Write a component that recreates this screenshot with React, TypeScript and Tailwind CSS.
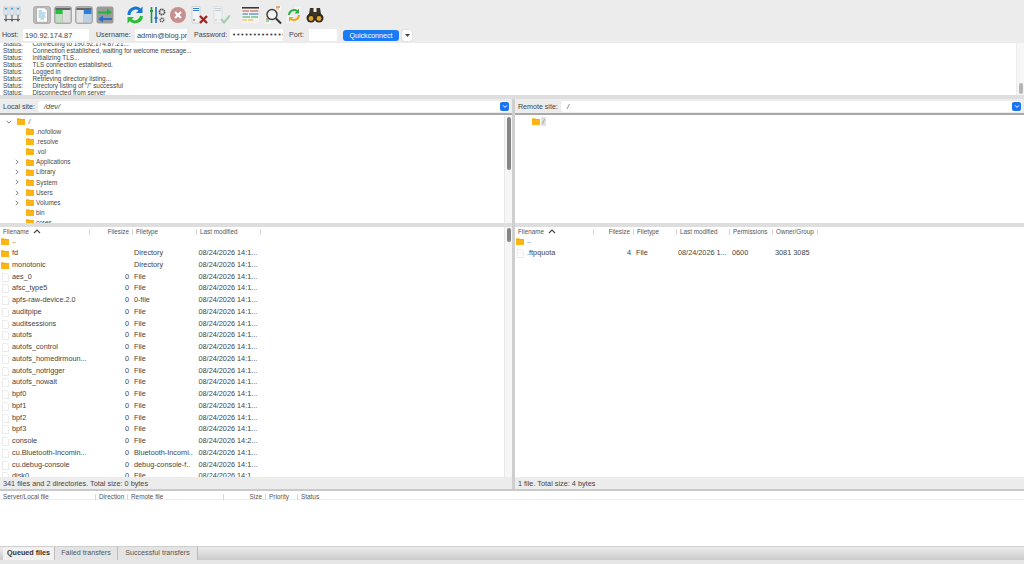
import React from "react";

const Ico = ({ w = 18, children, className = "" }: { w?: number; children: React.ReactNode; className?: string }) => (
  <svg width={w} height={20} viewBox={`0 0 ${w} 20`} className={`shrink-0 ${className}`}>{children}</svg>
);

const Folder = ({ className = "" }: { className?: string }) => (
  <svg width="8" height="7" viewBox="0 0 9 8" preserveAspectRatio="none" className={`shrink-0 ${className}`}>
    <path d="M0 1 a.6.6 0 0 1 .6-.6 H3.4 L4.2 1.2 H8.4 a.6.6 0 0 1 .6.6 V7.4 a.6.6 0 0 1-.6.6 H.6 a.6.6 0 0 1-.6-.6 Z" fill="#fdb515" />
    <rect x="0" y="1.4" width="9" height=".5" fill="#e8a010" />
  </svg>
);

const FileIco = () => (
  <svg width="7" height="9" viewBox="0 0 7 9" className="shrink-0">
    <path d="M.5.5 H4.8 L6.5 2.2 V8.5 H.5 Z" fill="#fff" stroke="#e2e2e2" strokeWidth=".7" />
  </svg>
);

const Chevron = ({ dir }: { dir: "down" | "right" }) => (
  <svg width="6" height="6" viewBox="0 0 6 6" className="shrink-0">
    <path d={dir === "down" ? "M.8 1.8 L3 4.2 L5.2 1.8" : "M1.8.8 L4.2 3 L1.8 5.2"} fill="none" stroke="#666" strokeWidth=".8" />
  </svg>
);

const DropBtn = () => (
  <span className="w-[9px] h-[9px] rounded-[2px] bg-[#1a73f0] flex items-center justify-center shrink-0">
    <svg width="6" height="5" viewBox="0 0 6 5"><path d="M1 1.3 L3 3.4 L5 1.3" fill="none" stroke="#fff" strokeWidth="1" /></svg>
  </span>
);

const Toolbar = () => (
  <div className="h-[27px] flex items-center pl-[3px] pt-[3px] shrink-0">
    {/* site manager */}
    <Ico w={18}>
      <rect x="1" y="2" width="4" height="8" fill="#dfe8ee" stroke="#a9b4ba" strokeWidth=".5" />
      <rect x="7" y="2" width="4" height="8" fill="#dfe8ee" stroke="#a9b4ba" strokeWidth=".5" />
      <rect x="13" y="2" width="4" height="8" fill="#dfe8ee" stroke="#a9b4ba" strokeWidth=".5" />
      <rect x="2" y="3" width="2" height="1.5" fill="#3d9be0" /><rect x="8" y="3" width="2" height="1.5" fill="#3d9be0" /><rect x="14" y="3" width="2" height="1.5" fill="#3d9be0" />
      <path d="M3 10 V14 M9 10 V14 M15 10 V14 M1 14.5 H17" stroke="#55636b" strokeWidth="1" />
      <circle cx="3" cy="15.5" r="1.1" fill="#5b6a72" /><circle cx="9" cy="15.5" r="1.1" fill="#5b6a72" /><circle cx="15" cy="15.5" r="1.1" fill="#5b6a72" />
    </Ico>
    {/* message log */}
    <Ico w={18} className="ml-[12px]">
      <rect x=".5" y="1.5" width="17" height="17" rx="2" fill="#bdbdbd" stroke="#969696" strokeWidth=".6" />
      <path d="M3.5 2.8 H11.5 L14.5 5.8 V17.2 H3.5 Z" fill="#fdfdfd" stroke="#808080" strokeWidth=".5" />
      <path d="M5.5 6 H9 M5.5 8 H12.5 M7.5 10 H12 M5.5 12 H12.5" stroke="#5aa5de" strokeWidth=".8" />
      <path d="M7.5 14 H11 M5.5 10 H7.5" stroke="#4fb56b" strokeWidth=".8" />
    </Ico>
    {/* local tree */}
    <Ico w={18} className="ml-[3px]">
      <rect x=".5" y="1.5" width="17" height="17" rx="2" fill="#b0b0b0" stroke="#8e8e8e" strokeWidth=".6" />
      <rect x="1.5" y="3" width="15" height="2" fill="#666" />
      <rect x="1.5" y="5" width="7" height="12.5" fill="#bfe0bf" />
      <rect x="1.5" y="5" width="7" height="4" fill="#22c13c" />
      <rect x="9" y="5" width="7.5" height="12.5" fill="#dedede" />
    </Ico>
    {/* remote tree */}
    <Ico w={18} className="ml-[3px]">
      <rect x=".5" y="1.5" width="17" height="17" rx="2" fill="#b0b0b0" stroke="#8e8e8e" strokeWidth=".6" />
      <rect x="1.5" y="3" width="15" height="2" fill="#666" />
      <rect x="1.5" y="5" width="7" height="12.5" fill="#e4e4e4" />
      <rect x="9" y="5" width="7.5" height="12.5" fill="#bcd0e4" />
      <rect x="9" y="5" width="7.5" height="4" fill="#2a80d8" />
    </Ico>
    {/* queue */}
    <Ico w={18} className="ml-[3px]">
      <rect x=".5" y="1.5" width="17" height="17" rx="2" fill="#9a9a9a" />
      <path d="M2 6.5 H11 V3.5 L16 7.5 L11 10 V8.5 H2 Z" fill="#22b53a" />
      <path d="M16 13 H7 V10.5 L2 14 L7 17.5 V15 H16 Z" fill="#2a6fc8" />
    </Ico>
    {/* refresh */}
    <Ico w={18} className="ml-[12px]">
      <path d="M3 10 A6.5 6.5 0 0 1 14 5" fill="none" stroke="#1677d2" strokeWidth="3" />
      <path d="M16.5 1.5 V8 H10 Z" fill="#1677d2" />
      <path d="M15.5 11 A6.5 6.5 0 0 1 4.5 15" fill="none" stroke="#2abf34" strokeWidth="3" />
      <path d="M1.5 18.5 V12 H8 Z" fill="#2abf34" />
    </Ico>
    {/* filters */}
    <Ico w={17} className="ml-[5px]">
      <path d="M2.5 2 V18" stroke="#1d9a3c" strokeWidth="1.6" />
      <path d="M7 2 V18" stroke="#1c6ed0" strokeWidth="1.6" />
      <rect x="1" y="5" width="3" height="2" fill="#1d9a3c" /><rect x="5.5" y="12" width="3" height="2" fill="#1c6ed0" />
      <circle cx="13" cy="7" r="2.6" fill="none" stroke="#4a4a4a" strokeWidth="1.7" strokeDasharray="1.4 .6" />
      <circle cx="13" cy="15" r="1.8" fill="none" stroke="#555" strokeWidth="1.4" strokeDasharray="1.1 .5" />
    </Ico>
    {/* cancel */}
    <Ico w={18} className="ml-[3px]">
      <circle cx="9" cy="10" r="8" fill="#c98e8e" />
      <path d="M6 7 L12 13 M12 7 L6 13" stroke="#fff" strokeWidth="2.2" />
    </Ico>
    {/* disconnect */}
    <Ico w={18} className="ml-[3px]">
      <path d="M2 1.5 H10 V18 H2 Z" fill="#f5f5f5" stroke="#b5b5b5" strokeWidth=".5" />
      <path d="M3 3.5 H9 M3 5.5 H9" stroke="#2f7fd0" strokeWidth="1.2" />
      <circle cx="4" cy="15" r=".8" fill="#444" />
      <path d="M10 11 L17 18 M17 11 L10 18" stroke="#a52222" strokeWidth="2.4" />
    </Ico>
    {/* reconnect */}
    <Ico w={18} className="ml-[4px] opacity-60">
      <path d="M2 1.5 H10 V18 H2 Z" fill="#f5f5f5" stroke="#c5c5c5" strokeWidth=".5" />
      <path d="M3 3.5 H9 M3 5.5 H9" stroke="#a9bccc" strokeWidth="1.2" />
      <circle cx="4" cy="15" r=".8" fill="#888" />
      <path d="M9 14 L12 17.5 L18 10.5" fill="none" stroke="#6fbb7c" strokeWidth="2" />
    </Ico>
    {/* directory listing filters */}
    <Ico w={19} className="ml-[11px]">
      <rect x="1" y="2" width="17" height="16" fill="#f2f2f2" />
      <rect x="1" y="2" width="17" height="1.6" fill="#3a3a3a" />
      <path d="M1.5 6 H8 M9 6 H17.5" stroke="#c84a3a" strokeWidth="1.2" />
      <path d="M1.5 9 H7 M8 9 H17.5" stroke="#2a6fc8" strokeWidth="1.2" />
      <path d="M1.5 12 H9 M10 12 H17" stroke="#2fae45" strokeWidth="1.2" />
      <path d="M1.5 15 H6 M7 15 H12" stroke="#e3b22c" strokeWidth="1.2" />
    </Ico>
    {/* compare */}
    <Ico w={18} className="ml-[4px]">
      <rect x="11" y="1" width="6" height="5" fill="#f7f7f7" /><path d="M12 2 H16" stroke="#c84a3a" strokeWidth="1" /><path d="M12 4 H15" stroke="#e3b22c" strokeWidth="1" />
      <rect x="1" y="12" width="6" height="7" fill="#f7f7f7" /><path d="M2 14 H6" stroke="#c84a3a" strokeWidth="1" /><path d="M2 16 H5" stroke="#2fae45" strokeWidth="1" />
      <circle cx="8" cy="9.5" r="5" fill="#f6f6f6" fillOpacity=".7" stroke="#3f3f3f" strokeWidth="1.5" />
      <path d="M12 13.5 L17 18.5" stroke="#333" strokeWidth="2" />
    </Ico>
    {/* sync browsing */}
    <Ico w={18} className="ml-[3px]">
      <rect x="9" y="1" width="8" height="9" fill="#f4f4f4" stroke="#ddd" strokeWidth=".5" />
      <rect x="1" y="10" width="8" height="9" fill="#f4f4f4" stroke="#ddd" strokeWidth=".5" />
      <path d="M4 10 A5 5 0 0 1 12 6" fill="none" stroke="#2fae45" strokeWidth="2" />
      <path d="M14 3.5 V8.5 H9.5 Z" fill="#2fae45" />
      <path d="M14 10 A5 5 0 0 1 6 14" fill="none" stroke="#e8a820" strokeWidth="2" />
      <path d="M4 17 V12 H8.5 Z" fill="#e8a820" />
    </Ico>
    {/* binoculars */}
    <Ico w={18} className="ml-[3px]">
      <path d="M4 3 H7.5 V7 H10.5 V3 H14 L15 9 H3 Z" fill="#3d3325" />
      <circle cx="5" cy="13" r="4.5" fill="#2e2a24" />
      <circle cx="13" cy="13" r="4.5" fill="#2e2a24" />
      <circle cx="5" cy="13.5" r="2.4" fill="#e2a52a" />
      <circle cx="13" cy="13.5" r="2.4" fill="#e2a52a" />
      <rect x="7.5" y="8" width="3" height="4" fill="#3d3325" />
    </Ico>
  </div>
);

const Field = ({ value, w, dots }: { value: string; w: string; dots?: boolean }) => (
  <div className={`${w} h-[12px] bg-white rounded-[1px] pl-[2px] overflow-hidden whitespace-nowrap text-[#444] shrink-0 ${dots ? "font-['DejaVu_Sans',sans-serif] text-[7px] leading-[12px] text-[#222]" : "text-[7.4px] leading-[13px]"}`}>{value}</div>
);

const QuickConnect = () => (
  <div className="h-[16px] flex items-center text-[7.1px] leading-[13px] shrink-0 text-[#444]">
    <span className="ml-[2px] w-[21px] shrink-0 pt-px">Host:</span>
    <Field value="190.92.174.87" w="w-[66px]" />
    <span className="ml-[7px] w-[39px] shrink-0 pt-px">Username:</span>
    <Field value="admin@blog.pro" w="w-[52px]" />
    <span className="ml-[7px] w-[36px] shrink-0 pt-px">Password:</span>
    <Field value="•••••••••••••" w="w-[53px]" dots />
    <span className="ml-[6px] w-[20px] shrink-0 pt-px">Port:</span>
    <Field value="" w="w-[28px]" />
    <span className="ml-[6px] w-[56px] h-[11px] rounded-[3px] bg-[#1a7cf4] text-white text-center leading-[12px] shrink-0">Quickconnect</span>
    <span className="ml-[3px] w-[10px] h-[11px] rounded-[2px] bg-white shadow-[0_0_1px_#999] flex items-center justify-center shrink-0">
      <svg width="5" height="3" viewBox="0 0 5 3"><path d="M0 0 H5 L2.5 3 Z" fill="#444" /></svg>
    </span>
  </div>
);

const logLines = [
  "Connecting to 190.92.174.87:21...",
  "Connection established, waiting for welcome message...",
  "Initializing TLS...",
  "TLS connection established.",
  "Logged in",
  "Retrieving directory listing...",
  'Directory listing of "/" successful',
  "Disconnected from server",
];

const Log = () => (
  <div className="h-[52px] bg-white flex shrink-0 overflow-hidden">
    <div className="flex-1 overflow-hidden flex flex-col justify-end">
      <div className="-mb-[1px] text-[6.4px] text-[#444]">
        {logLines.map((l) => (
          <div key={l} className="h-[7px] leading-[7px] flex whitespace-nowrap">
            <span className="w-[32.5px] pl-[3px] shrink-0">Status:</span>
            <span>{l}</span>
          </div>
        ))}
      </div>
    </div>
    <div className="w-[8px] bg-[#f6f6f6] border-l border-[#ececec] flex flex-col justify-end pb-[1px] items-center">
      <div className="w-[4px] h-[11px] bg-[#b5b5b5] rounded-full" />
    </div>
  </div>
);

const SiteBar = ({ label, path, labelW }: { label: string; path: string; labelW: string }) => (
  <div className="h-[16px] flex flex-col shrink-0">
    <div className="h-[14px] flex items-center text-[7.1px] text-[#444] bg-[#ececec]">
      <span className={`${labelW} pl-[3px] pt-[2px] shrink-0 whitespace-nowrap`}>{label}</span>
      <div className="flex-1 h-[11px] bg-white rounded-l-[3px] flex items-center pl-[6px] pr-[1px] mr-[2px] text-[7.4px]">
        <span className="flex-1 italic pt-[2px]">{path}</span>
        <DropBtn />
      </div>
    </div>
    <div className="h-[2px] bg-[#a9a9a9]" />
  </div>
);

const treeItems: { n: string; c?: boolean }[] = [
  { n: ".nofollow" }, { n: ".resolve" }, { n: ".vol" },
  { n: "Applications", c: true }, { n: "Library", c: true }, { n: "System", c: true },
  { n: "Users", c: true }, { n: "Volumes", c: true }, { n: "bin" }, { n: "cores" },
];

const ScrollTrack = ({ thumb, top }: { thumb: string; top: string }) => (
  <div className={`w-[8px] shrink-0 bg-[#f6f6f6] border-l border-[#e8e8e8] flex justify-center ${top}`}>
    <div className={`w-[4px] ${thumb} bg-[#858585] rounded-full`} />
  </div>
);

const LocalTree = () => (
  <div className="h-[108px] bg-white flex shrink-0 overflow-hidden">
    <div className="flex-1 overflow-hidden pt-[1.5px] text-[6.4px] text-[#4a4a4a]">
      <div className="h-[10.15px] flex items-center pl-[5.5px]">
        <Chevron dir="down" />
        <Folder className="ml-[5.5px]" />
        <span className="ml-[3.5px] italic">/</span>
      </div>
      {treeItems.map((t) => (
        <div key={t.n} className="h-[10.15px] flex items-center pl-[13.5px]">
          <span className="w-[6px] shrink-0">{t.c && <Chevron dir="right" />}</span>
          <Folder className="ml-[6px]" />
          <span className="ml-[2.5px]">{t.n}</span>
        </div>
      ))}
    </div>
    <ScrollTrack thumb="h-[53px]" top="pt-[2px]" />
  </div>
);

const RemoteTree = () => (
  <div className="h-[108px] bg-white shrink-0 overflow-hidden pt-[1.5px] text-[6.4px] text-[#666]">
    <div className="h-[10.15px] flex items-center pl-[17px]">
      <Folder />
      <span className="ml-[1px] w-[5px] h-[9px] bg-[#e3e3e3] text-center leading-[9px] italic">/</span>
    </div>
  </div>
);

const HeadCell = ({ w, label, right, sort, last }: { w: string; label: string; right?: boolean; sort?: boolean; last?: boolean }) => (
  <div className={`${w} shrink-0 h-[6px] flex items-center whitespace-nowrap ${right ? "justify-end pr-[3px]" : "pl-[3px]"} ${last ? "" : "border-r border-[#d6d6d6]"}`}>
    <span>{label}</span>
    {sort && (
      <svg width="8" height="5" viewBox="0 0 8 5" className="ml-[4px]"><path d="M1 4 L4 1 L7 4" fill="none" stroke="#444" strokeWidth="1.1" /></svg>
    )}
  </div>
);

type Row = { n: string; s?: string; t?: string; d?: string; dir?: boolean };

const d1 = "08/24/2026 14:1...";
const f = (n: string, d = d1): Row => ({ n, s: "0", t: "File", d });
const localRows: Row[] = [
  { n: "..", dir: true },
  { n: "fd", t: "Directory", d: d1, dir: true },
  { n: "monotonic", t: "Directory", d: d1, dir: true },
  f("aes_0"), f("afsc_type5"),
  { n: "apfs-raw-device.2.0", s: "0", t: "0-file", d: d1 },
  f("auditpipe"), f("auditsessions"), f("autofs"), f("autofs_control"), f("autofs_homedirmoun..."),
  f("autofs_notrigger"), f("autofs_nowait"), f("bpf0"), f("bpf1"), f("bpf2"), f("bpf3"),
  f("console", "08/24/2026 14:2..."),
  { n: "cu.Bluetooth-Incomin...", s: "0", t: "Bluetooth-Incomi..", d: d1 },
  { n: "cu.debug-console", s: "0", t: "debug-console-f..", d: d1 },
  f("disk0"),
];

const NameCell = ({ r }: { r: Row }) => (
  <div className="w-[90px] shrink-0 flex items-center gap-[3px] pl-px whitespace-nowrap">
    <span className="w-[8px] flex justify-center shrink-0">{r.dir ? <Folder /> : <FileIco />}</span>
    <span>{r.n}</span>
  </div>
);

const LocalList = () => (
  <div className="h-[250px] bg-white flex shrink-0 overflow-hidden">
    <div className="flex-1 min-w-0 flex flex-col">
      <div className="h-[8px] pt-[1px] shrink-0 flex items-center text-[6.3px] text-[#555] bg-white">
        <HeadCell w="w-[90px]" label="Filename" sort />
        <HeadCell w="w-[43px]" label="Filesize" right />
        <HeadCell w="w-[64px]" label="Filetype" />
        <HeadCell w="w-[64px]" label="Last modified" />
      </div>
      <div className="flex-1 overflow-hidden text-[7.3px] text-[#444]">
        <div className="h-[1px]" />
        {localRows.map((r) => (
          <div key={r.n} className="h-[11.75px] flex items-center">
            <NameCell r={r} />
            <div className="w-[39px] shrink-0 text-right">{r.s}</div>
            <div className="w-[69.5px] shrink-0 pl-[5px] whitespace-nowrap">{r.t}</div>
            <div className="whitespace-nowrap">{r.d}</div>
          </div>
        ))}
      </div>
    </div>
    <ScrollTrack thumb="h-[14px]" top="pt-[1px]" />
  </div>
);

const RemoteList = () => (
  <div className="h-[250px] bg-white flex flex-col shrink-0 overflow-hidden">
    <div className="h-[8px] pt-[1px] shrink-0 flex items-center text-[6.3px] text-[#555]">
      <HeadCell w="w-[79px]" label="Filename" sort />
      <HeadCell w="w-[40px]" label="Filesize" right />
      <HeadCell w="w-[43px]" label="Filetype" />
      <HeadCell w="w-[53px]" label="Last modified" />
      <HeadCell w="w-[43px]" label="Permissions" />
      <HeadCell w="w-[45px]" label="Owner/Group" />
    </div>
    <div className="text-[7.3px] text-[#444]">
      <div className="h-[1px]" />
      <div className="h-[11.75px] flex items-center pl-[1px]"><span className="w-[8px] flex justify-center"><Folder /></span><span className="ml-[3px]">..</span></div>
      <div className="h-[11.75px] flex items-center whitespace-nowrap">
        <span className="w-[80px] shrink-0 flex items-center pl-[1px]"><span className="w-[8px] flex justify-center"><FileIco /></span><span className="ml-[3px]">.ftpquota</span></span>
        <span className="w-[36px] shrink-0 text-right">4</span>
        <span className="w-[47px] shrink-0 pl-[5px]">File</span>
        <span className="w-[54px] shrink-0">08/24/2026 1...</span>
        <span className="w-[43px] shrink-0">0600</span>
        <span>3081 3085</span>
      </div>
    </div>
  </div>
);

const Status = ({ text }: { text: string }) => (
  <div className="h-[12px] bg-[#ececec] text-[7.3px] leading-[13px] pl-[3px] text-[#444] shrink-0">{text}</div>
);

const Pane = ({ children, className }: { children: React.ReactNode; className: string }) => (
  <div className={`${className} flex flex-col shrink-0`}>{children}</div>
);

const Sash = () => <div className="h-[4px] bg-[#dedede] shrink-0" />;

const Queue = () => (
  <div className="h-[55px] bg-white shrink-0 flex flex-col">
    <div className="h-[9px] pt-[3px] flex items-center text-[6.4px] text-[#555] border-b border-[#ededed]">
      <HeadCell w="w-[96px]" label="Server/Local file" />
      <HeadCell w="w-[32px]" label="Direction" />
      <HeadCell w="w-[96px]" label="Remote file" />
      <HeadCell w="w-[42px]" label="Size" right />
      <HeadCell w="w-[32px]" label="Priority" />
      <HeadCell w="w-[60px]" label="Status" last />
    </div>
  </div>
);

const Tabs = () => (
  <div className="h-[18px] shrink-0 bg-[#e6e6e6] border-t border-[#cfcfcf] flex flex-col text-[7.2px] text-[#555]">
    <div className="h-[13px] flex w-full pl-[3px] bg-gradient-to-b from-[#ececec] to-[#cbcbcb]">
      <div className="w-[52px] h-[13px] bg-[#f1f1f1] font-bold text-[#333] text-center leading-[12px] border-r border-[#bbb]">Queued files</div>
      <div className="w-[63px] h-[13px] bg-[#e4e4e4] text-center leading-[12px] border-r border-[#bbb]">Failed transfers</div>
      <div className="w-[80px] h-[13px] bg-[#e4e4e4] text-center leading-[12px] border-r border-[#bbb]">Successful transfers</div>
    </div>
  </div>
);

export default function App() {
  return (
    <div className="w-[1024px] h-[564px] overflow-hidden bg-[#ececec] flex flex-col font-['Liberation_Sans',Arial,sans-serif]">
      <Toolbar />
      <QuickConnect />
      <Log />
      <Sash />
      <div className="flex shrink-0">
        <Pane className="w-[512px]">
          <SiteBar label="Local site:" path="/dev/" labelW="w-[38px]" />
          <LocalTree />
          <Sash />
          <LocalList />
          <Status text="341 files and 2 directories. Total size: 0 bytes" />
        </Pane>
        <div className="w-[3px] shrink-0 bg-[#cfcfcf]" />
        <Pane className="w-[509px]">
          <SiteBar label="Remote site:" path="/" labelW="w-[46px]" />
          <RemoteTree />
          <Sash />
          <RemoteList />
          <Status text="1 file. Total size: 4 bytes" />
        </Pane>
      </div>
      <div className="h-[2px] bg-[#c9c9c9] shrink-0" />
      <Queue />
      <Tabs />
    </div>
  );
}
